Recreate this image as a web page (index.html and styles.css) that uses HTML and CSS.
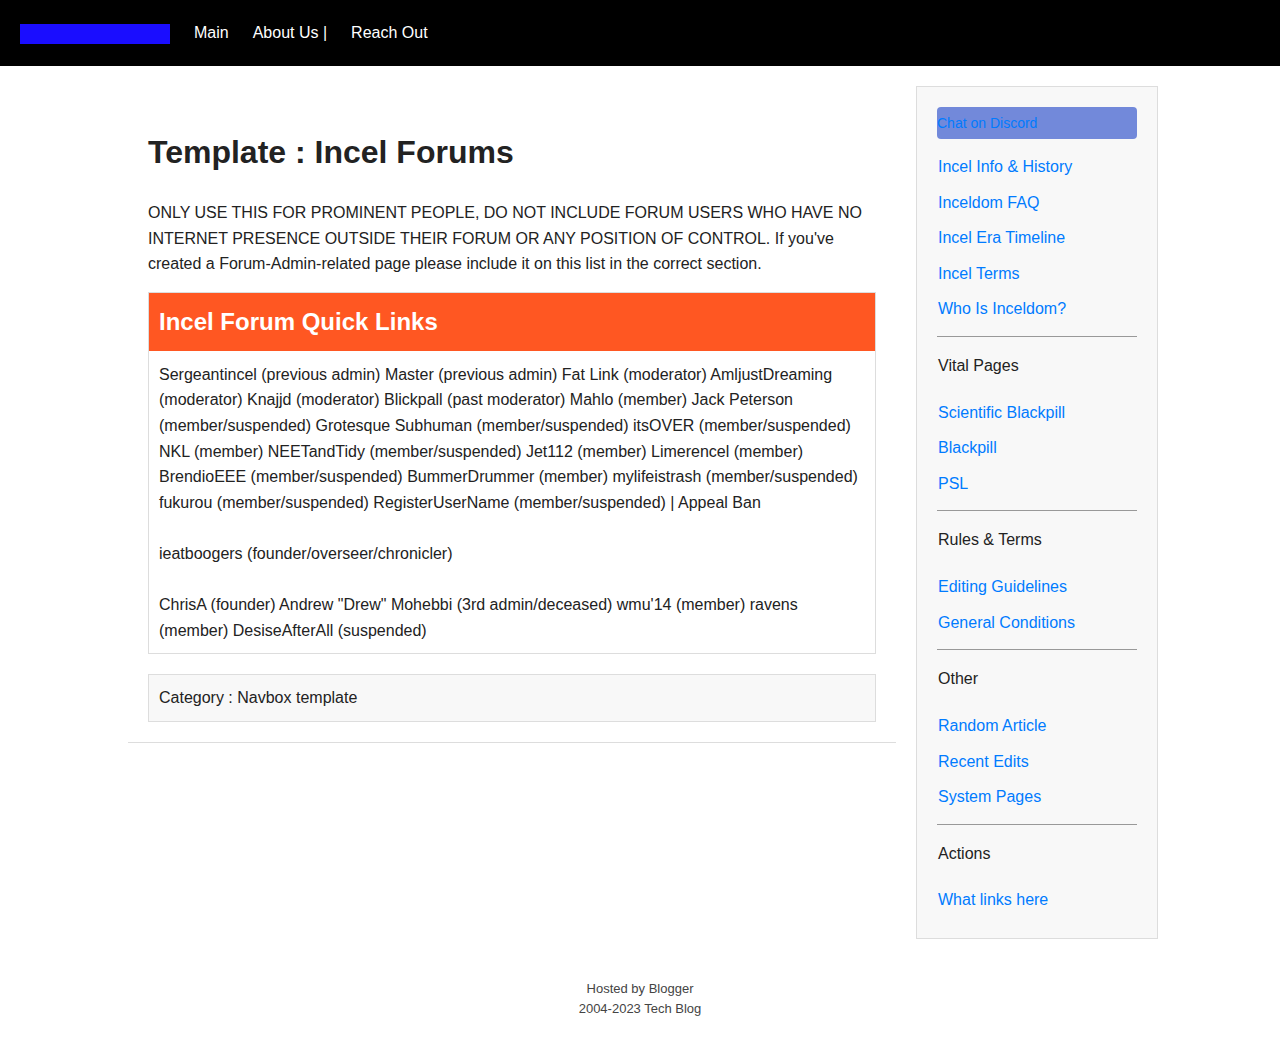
FILE: index.html
```html
<!DOCTYPE html>
<html lang="en">
<head>
    <meta charset="UTF-8">
    <meta name="viewport" content="width=device-width, initial-scale=1.0">
    <title>Template : Incel Forums</title>
    <link rel="stylesheet" href="styles.css">
</head>
<body>
    <div class="topbar">
        <div class="logo"></div>
        <a class="nav" href="#">Main</a>
        <a class="nav" href="#">About Us |</a>
        <a class="nav" href="#">Reach Out</a>
    </div>

    <div class="page">
        <div class="main">
            <div class="inner">
                <h1>Template : Incel Forums</h1>
                <p class="intro">ONLY USE THIS FOR PROMINENT PEOPLE, DO NOT INCLUDE FORUM USERS WHO HAVE NO INTERNET PRESENCE OUTSIDE THEIR FORUM OR ANY POSITION OF CONTROL. If you've created a Forum-Admin-related page please include it on this list in the correct section.</p>
                <div class="navbox">
                    <div class="navbox-title">Incel Forum Quick Links</div>
                    <div class="navbox-body">
                        Sergeantincel (previous admin) Master (previous admin) Fat Link (moderator) AmljustDreaming (moderator) Knajjd (moderator) Blickpall (past moderator) Mahlo (member) Jack Peterson (member/suspended) Grotesque Subhuman (member/suspended) itsOVER (member/suspended) NKL (member) NEETandTidy (member/suspended) Jet112 (member) Limerencel (member) BrendioEEE (member/suspended) BummerDrummer (member) mylifeistrash (member/suspended) fukurou (member/suspended) RegisterUserName (member/suspended) | Appeal Ban<br><br>
                        ieatboogers (founder/overseer/chronicler)<br><br>
                        ChrisA (founder) Andrew "Drew" Mohebbi (3rd admin/deceased) wmu'14 (member) ravens (member) DesiseAfterAll (suspended)
                    </div>
                </div>
                <div class="category">Category : Navbox template</div>
            </div>
            <hr class="end">
        </div>

        <div class="sidebar">
            <a class="discord" href="#">Chat on Discord</a>
            <div class="group">
                <a href="#">Incel Info &amp; History</a>
                <a href="#">Inceldom FAQ</a>
                <a href="#">Incel Era Timeline</a>
                <a href="#">Incel Terms</a>
                <a href="#">Who Is Inceldom?</a>
            </div>
            <hr>
            <div class="heading">Vital Pages</div>
            <div class="group">
                <a href="#">Scientific Blackpill</a>
                <a href="#">Blackpill</a>
                <a href="#">PSL</a>
            </div>
            <hr>
            <div class="heading">Rules &amp; Terms</div>
            <div class="group">
                <a href="#">Editing Guidelines</a>
                <a href="#">General Conditions</a>
            </div>
            <hr>
            <div class="heading">Other</div>
            <div class="group">
                <a href="#">Random Article</a>
                <a href="#">Recent Edits</a>
                <a href="#">System Pages</a>
            </div>
            <hr>
            <div class="heading">Actions</div>
            <div class="group">
                <a href="#">What links here</a>
            </div>
        </div>
    </div>

    <div class="footer">
        Hosted by Blogger<br>
        2004-2023 Tech Blog
    </div>
</body>
</html>
```

FILE: styles.css
```css
html,body,div,p,h1,hr{margin:0; padding:0;}
body{font-family:"Liberation Sans", Arial, sans-serif; font-size:16px; color:#222; background:#fff;}
a{text-decoration:none;}

/* top bar */
.topbar{height:66px; background:#000; display:flex; align-items:center; padding:0 20px;}
.logo{width:150px; height:20px; background:#1a0dff; margin-top:2px; margin-right:24px;}
.topbar .nav{color:#fff; margin-right:24px; line-height:20px;}

/* two columns */
.page{display:flex; align-items:flex-start; gap:20px; padding:20px 0 0 128px;}
.main{width:768px;}
.inner{padding:47px 20px 20px;}

h1{font-size:32px; line-height:38px; font-weight:bold; margin-bottom:29px;}
.intro{line-height:25.6px; margin-bottom:15px;}

.navbox{border:1px solid #ddd;}
.navbox-title{background:#ff5722; color:#fff; font-size:24px; font-weight:bold; line-height:30px; padding:14px 10px;}
.navbox-body{padding:11px 10px 10px; line-height:25.6px;}

.category{margin-top:20px; background:#f8f8f8; border:1px solid #ddd; padding:10px; line-height:25.6px;}

hr.end{border:0; border-top:1px solid #ddd;}

/* sidebar */
.sidebar{background:#f8f8f8; border:1px solid #ddd; padding:20px 20px 21px 21px; width:199px;}
.discord{display:block; height:32px; line-height:32px; background:#7289da; border-radius:4px; color:#007bff; font-size:14px; margin:0 0 10px -1px;}
.group a{display:block; color:#007bff; line-height:19.5px; padding:8px 0;}
.sidebar hr{border:0; border-top:1px solid #999; margin:9px 0 9px -1px; width:200px;}
.heading{line-height:20px; padding:10px 0; margin-bottom:9px; color:#222;}
.group:last-child a{padding-top:7px;}

.footer{text-align:center; font-size:13px; line-height:20px; color:#444; padding:40px 0 20px;}
```
